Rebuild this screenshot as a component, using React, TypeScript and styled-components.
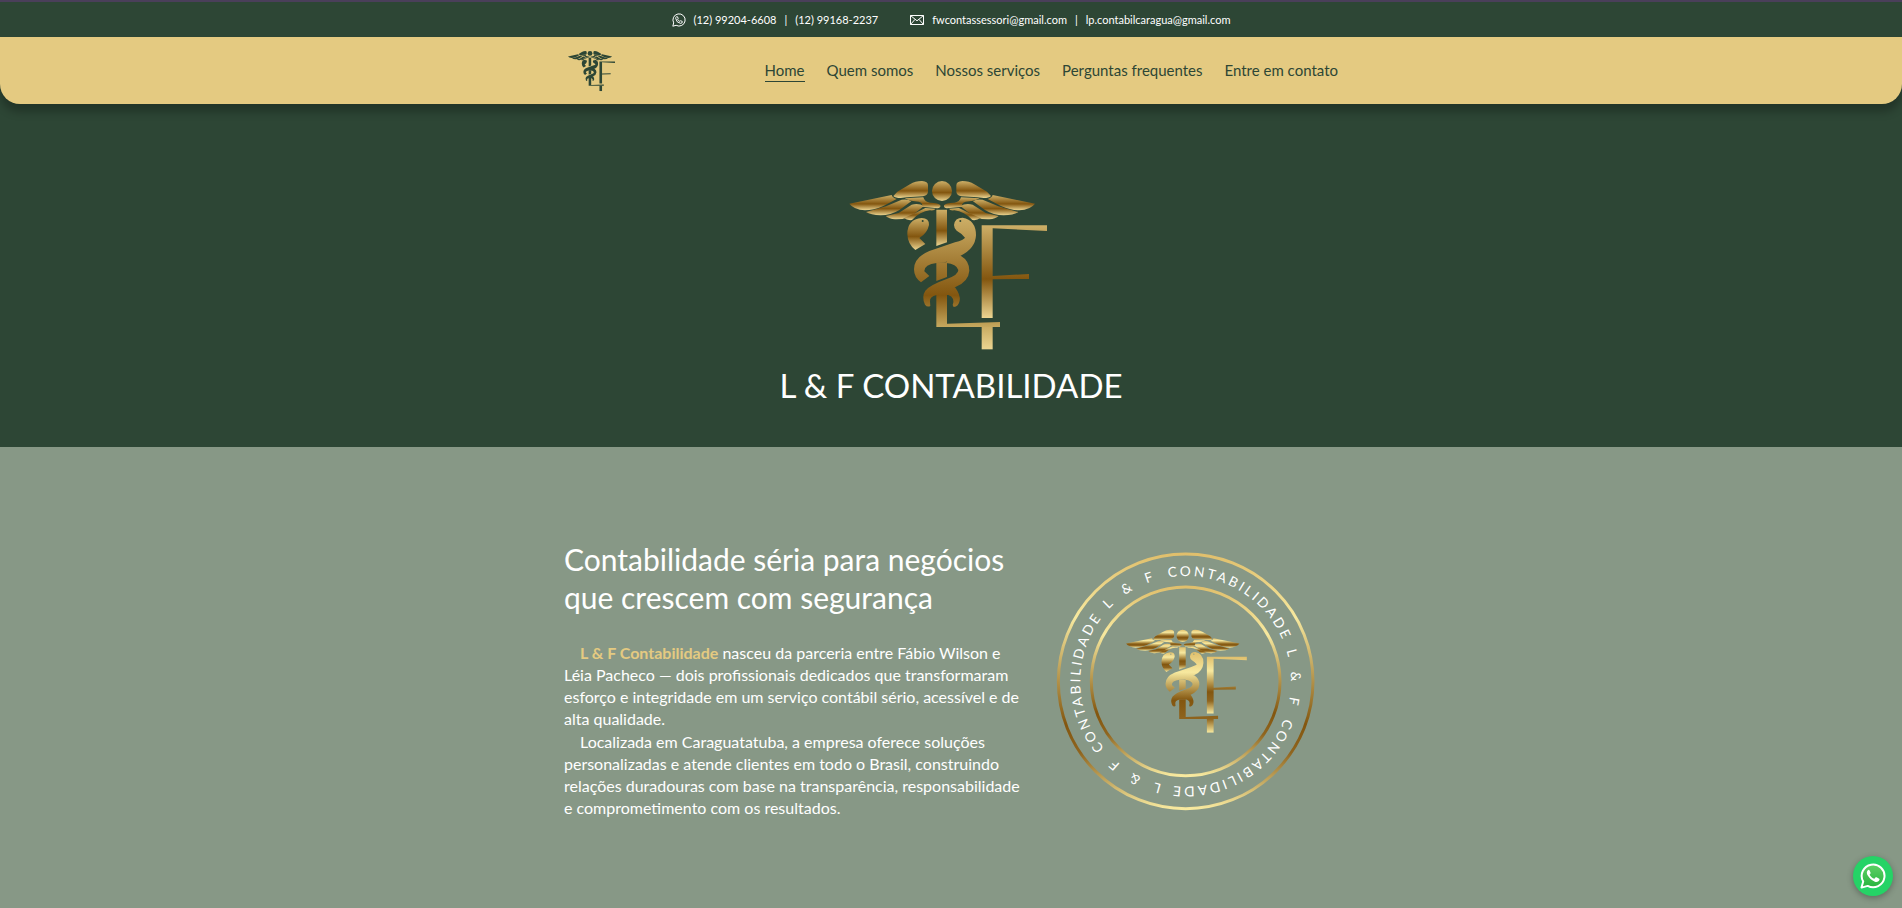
import React, { useId } from "react";
import styled, { createGlobalStyle } from "styled-components";

const green = "#2d4635";
const gold = "#e4ca81";
const sage = "#879886";

const GlobalStyle = createGlobalStyle`
  *, *::before, *::after { box-sizing: border-box; }
  body {
    margin: 0;
    background: ${sage};
    color: #fff;
    font-family: Lato, "Liberation Sans", sans-serif;
    font-size: 16px;
  }
  h1, h2, p, ul { margin: 0; padding: 0; }
`;

const TopBar = styled.div`
  display: flex;
  justify-content: center;
  gap: 32px;
  height: 37px;
  border-top: 2px solid #4a3f5a;
  background: ${green};
  font-size: 11px;
`;

const ContactGroup = styled.div`
  display: flex;
  align-items: center;
  gap: 8px;
`;

const ContactLink = styled.a`
  color: #fff;
  text-decoration: none;
`;

const ContactIcon = styled.svg`
  width: 14px;
  height: 14px;
  fill: none;
  stroke: #fff;
`;

const Header = styled.header`
  position: relative;
  background: ${gold};
  border-radius: 0 0 20px 20px;
  box-shadow: 0 8px 8px rgba(0, 0, 0, 0.25);
`;

const Backdrop = styled.div`
  background: ${green};
`;

const Container = styled.div`
  display: flex;
  align-items: flex-start;
  justify-content: space-between;
  width: 100%;
  max-width: 774px;
  margin: 0 auto;
`;

const HeaderInner = styled(Container)`
  align-items: center;
  height: 67px;
`;

const BrandLink = styled.a`
  display: block;
`;

const NavList = styled.ul`
  display: flex;
  gap: 22px;
  list-style: none;
`;

const NavLink = styled.a<{ $active?: boolean }>`
  display: block;
  color: ${green};
  font-size: 15px;
  line-height: 22px;
  text-decoration: none;
  border-bottom: 1px solid ${(p) => (p.$active ? green : "transparent")};
`;

const Hero = styled.section`
  display: flex;
  flex-direction: column;
  align-items: center;
  padding: 76px 16px 40px;
`;

const HeroTitle = styled.h1`
  margin-top: 14px;
  font-size: 33px;
  font-weight: 400;
  line-height: 43px;
`;

const About = styled.section`
  padding: 93px 0;
`;

const AboutText = styled.div`
  width: 460px;
`;

const AboutTitle = styled.h2`
  margin-bottom: 26px;
  font-size: 30px;
  font-weight: 400;
  line-height: 38px;
`;

const Paragraph = styled.p`
  margin-bottom: 1px;
  line-height: 22px;
  text-indent: 16px;
`;

const Highlight = styled.strong`
  color: ${gold};
  font-weight: 700;
`;

const LogoSvg = styled.svg<{ $width: number; $height: number }>`
  display: block;
  width: ${(p) => p.$width}px;
  height: ${(p) => p.$height}px;
`;

const SealSvg = styled.svg`
  display: block;
  flex: none;
  width: 290px;
  height: 290px;
  margin-right: 8px;
`;

const SealText = styled.text`
  fill: #fff;
  font-size: 41px;
  letter-spacing: 8px;
  white-space: pre;
`;

const ChatButton = styled.a`
  position: fixed;
  right: 9px;
  bottom: 12px;
  display: flex;
  align-items: center;
  justify-content: center;
  width: 40px;
  height: 40px;
  border-radius: 50%;
  background: #25d366;
  box-shadow: 0 2px 6px rgba(0, 0, 0, 0.3);
`;

type Stop = [number, string];
interface Palette {
  part: Stop[];
  snake: Stop[];
  foot: Stop[];
  eye: string;
}

const heroGold: Palette = {
  part: [[0, "#cdaf67"], [0.58, "#83560f"], [1, "#ecd591"]],
  snake: [[0, "#cdaf67"], [0.59, "#83560f"], [0.84, "#c9ac62"], [1, "#ecd591"]],
  foot: [[0, "#c9ac62"], [1, "#ecd591"]],
  eye: green,
};

const sealGold: Palette = {
  part: [[0, "#e0bf6c"], [0.25, "#f7e99f"], [0.62, "#83560f"], [0.78, "#8f651f"], [1, "#f7e99f"]],
  snake: [[0, "#e0bf6c"], [0.25, "#f7e99f"], [0.6, "#83560f"], [0.84, "#8f651f"]],
  foot: [[0, "#8f651f"], [1, "#f7e99f"]],
  eye: sage,
};

const flat = (color: string): Palette => ({
  part: [[0, color]],
  snake: [[0, color]],
  foot: [[0, color]],
  eye: gold,
});

const wingParts = [
  "M160 78L172 65L210 43Q226 33 246 33Q264 34 264 46V66Q262 77 248 79L200 82L182 84Q166 84 160 78Z",
  "M28 101L155 75Q157 83 170 87L130 108Q100 121 75 121Q42 119 28 101Z",
  "M78 126L138 109L185 89Q205 86 214 94L178 120Q152 136 122 136Q92 135 78 126Z",
  "M137 138L176 129L215 104Q236 99 252 108L214 138Q190 149 165 148Q147 147 137 138Z",
  "M192 144Q226 130 256 114L286 116Q284 123 270 121Q240 124 216 150Q202 152 192 144Z",
  "M194 85L250 82Q254 96 270 98Q296 98 301 106Q303 114 292 115L246 110Q250 99 236 95Q212 95 194 85Z",
];

function LogoMark({ palette }: { palette: Palette }) {
  const id = useId();
  const stops = (list: Stop[]) => list.map(([at, c]) => <stop key={at} offset={at} stopColor={c} />);
  const part = `url(#${id}p)`;
  const snake = `url(#${id}s)`;
  return (
    <g>
      <defs>
        <linearGradient id={`${id}p`} x1="0" y1="0" x2="0" y2="1">{stops(palette.part)}</linearGradient>
        <linearGradient id={`${id}s`} gradientUnits="userSpaceOnUse" x1="0" y1="143" x2="0" y2="538">{stops(palette.snake)}</linearGradient>
        <linearGradient id={`${id}f`} x1="0" y1="0" x2="0" y2="1">{stops(palette.foot)}</linearGradient>
      </defs>
      <g fill={part}>
        <circle cx="306" cy="63" r="30" />
        {wingParts.map((d) => <path key={d} d={d} />)}
        <g transform="matrix(-1 0 0 1 613 0)">
          {wingParts.map((d) => <path key={d} d={d} />)}
        </g>
        <path d="M289 119H321V217L289 228Z" />
        <path d="M202 192Q202 148 245 144Q268 144 267 165Q262 190 238 204L256 222L226 240Q203 222 202 192Z" />
        <path d="M425 166H621V183L458 175V318L567 312V327L458 328V444H425Z" />
      </g>
      <g fill={snake}>
        <path d="M342 165Q344 143 368 143Q408 150 408 196Q406 236 362 257L330 272Q312 279 290 279Q252 284 253 304L268 318L243 337Q222 322 222 298Q222 262 268 243L345 217Q372 209 375 203Q365 190 350 182Q342 175 342 165Z" />
        <path d="M362 257Q388 272 388 302Q386 335 345 352L325 375H290Q268 380 270 395L271 408Q262 413 255 404Q244 380 256 362Q270 345 320 327Q355 315 355 300Q350 282 318 279L330 258Z" />
        <path d="M345 352Q362 375 359 392Q356 409 341 411L338 405Q346 383 325 375L318 360Z" />
        <path d="M289 277H321V321L289 333Z" />
        <path d="M289 374H321V461L480 456V471H289Z" />
      </g>
      <path d="M425 471H458V538H425Z" fill={`url(#${id}f)`} />
      <circle cx="248" cy="153" r="3" fill={palette.eye} />
      <circle cx="361" cy="153" r="3" fill={palette.eye} />
    </g>
  );
}

function Seal() {
  return (
    <SealSvg viewBox="0 0 870 870" role="img" aria-label="Selo L & F Contabilidade">
      <defs>
        <linearGradient id="ring" x1="0" y1="0" x2="0" y2="1">
          <stop offset="0" stopColor="#e0bf6c" />
          <stop offset="0.25" stopColor="#f7e99f" />
          <stop offset="0.67" stopColor="#83560f" />
          <stop offset="0.78" stopColor="#8f651f" />
          <stop offset="1" stopColor="#f7e99f" />
        </linearGradient>
        <path id="orbit" d="M206 208A316 316 0 0 1 668 640A316 316 0 0 1 206 208" />
      </defs>
      <g fill="none" stroke="url(#ring)" strokeWidth="9">
        <circle cx="437" cy="424" r="382" />
        <circle cx="437" cy="424" r="283" />
      </g>
      {[0, 120, 240].map((angle) => (
        <SealText key={angle} transform={`rotate(${angle} 437 424)`}>
          <textPath href="#orbit">{"L  &  F  CONTABILIDADE"}</textPath>
        </SealText>
      ))}
      <g transform="translate(241 249) scale(0.611)">
        <LogoMark palette={sealGold} />
      </g>
    </SealSvg>
  );
}

function ChatIcon() {
  return (
    <svg width="26" height="26" viewBox="0 0 26 26" aria-hidden="true">
      <defs>
        <linearGradient id="chat" x1="0" y1="0" x2="0" y2="1">
          <stop offset="0" stopColor="#5fd066" />
          <stop offset="1" stopColor="#27b43e" />
        </linearGradient>
      </defs>
      <path d="M1.5 24.6L3.2 18.5A11.4 11.4 0 1 1 7.7 22.9Z" fill="url(#chat)" stroke="#fff" strokeWidth="2" strokeLinejoin="round" />
      <path d="M9.6 7.4C9.2 6.6 8.3 6.7 7.8 7.3C6.4 8.8 6.6 10.8 7.8 12.6C9.6 15.4 11.8 17.6 14.9 18.7C17 19.4 19.2 18.5 19.5 16.6C19.6 15.9 19.4 15.7 18.8 15.4L16.6 14.3C16 14 15.7 14.2 15.4 14.6L14.4 15.8C12.3 15.1 10.6 13.5 9.6 11.7L10.5 10.5C10.7 10.2 10.7 9.9 10.5 9.5Z" fill="#fff" />
    </svg>
  );
}

const navItems = ["Home", "Quem somos", "Nossos serviços", "Perguntas frequentes", "Entre em contato"];

export default function App() {
  return (
    <>
      <GlobalStyle />
      <TopBar>
        <ContactGroup>
          <ContactIcon viewBox="0 0 14 14" aria-hidden="true">
            <path d="M0.8 13.2L1.7 9.9A6.1 6.1 0 1 1 4.1 12.3Z" />
            <path d="M4.6 3.6L5.4 3.7L6.2 5.4L5.6 6.3Q6.4 7.8 7.8 8.4L8.7 7.7L10.4 8.6Q10.3 10.4 8.6 10.4Q4.4 9.8 3.7 5.4Q3.7 4.2 4.6 3.6Z" />
          </ContactIcon>
          <ContactLink href="tel:+5512992046608">(12) 99204-6608</ContactLink>
          <span>|</span>
          <ContactLink href="tel:+5512991682237">(12) 99168-2237</ContactLink>
        </ContactGroup>
        <ContactGroup>
          <ContactIcon viewBox="0 0 14 14" aria-hidden="true">
            <path d="M0.5 2.5H13.5V11.5H0.5ZM0.5 2.5L7 7.8L13.5 2.5M0.5 11.5L5 6.4M13.5 11.5L9 6.4" />
          </ContactIcon>
          <ContactLink href="mailto:fwcontassessori@gmail.com">fwcontassessori@gmail.com</ContactLink>
          <span>|</span>
          <ContactLink href="mailto:lp.contabilcaragua@gmail.com">lp.contabilcaragua@gmail.com</ContactLink>
        </ContactGroup>
      </TopBar>
      <Backdrop>
        <Header>
          <HeaderInner>
            <BrandLink href="#home" aria-label="L & F Contabilidade">
              <LogoSvg $width={54} $height={42} viewBox="-22 20 681 530">
                <LogoMark palette={flat(green)} />
              </LogoSvg>
            </BrandLink>
            <nav>
              <NavList>
                {navItems.map((item, i) => (
                  <li key={item}>
                    <NavLink href="#home" $active={i === 0}>{item}</NavLink>
                  </li>
                ))}
              </NavList>
            </nav>
          </HeaderInner>
        </Header>
        <Hero>
          <LogoSvg $width={212} $height={170} viewBox="15 30 636 510">
            <LogoMark palette={heroGold} />
          </LogoSvg>
          <HeroTitle>L &amp; F CONTABILIDADE</HeroTitle>
        </Hero>
      </Backdrop>
      <About>
        <Container>
          <AboutText>
            <AboutTitle>Contabilidade séria para negócios que crescem com segurança</AboutTitle>
            <Paragraph>
              <Highlight>L &amp; F Contabilidade</Highlight> nasceu da parceria entre Fábio Wilson e Léia Pacheco — dois
              profissionais dedicados que transformaram esforço e integridade em um serviço contábil sério, acessível e
              de alta qualidade.
            </Paragraph>
            <Paragraph>
              Localizada em Caraguatatuba, a empresa oferece soluções personalizadas e atende clientes em todo o Brasil,
              construindo relações duradouras com base na transparência, responsabilidade e comprometimento com os
              resultados.
            </Paragraph>
          </AboutText>
          <Seal />
        </Container>
      </About>
      <ChatButton href="https://wa.me/5512992046608" aria-label="WhatsApp">
        <ChatIcon />
      </ChatButton>
    </>
  );
}
